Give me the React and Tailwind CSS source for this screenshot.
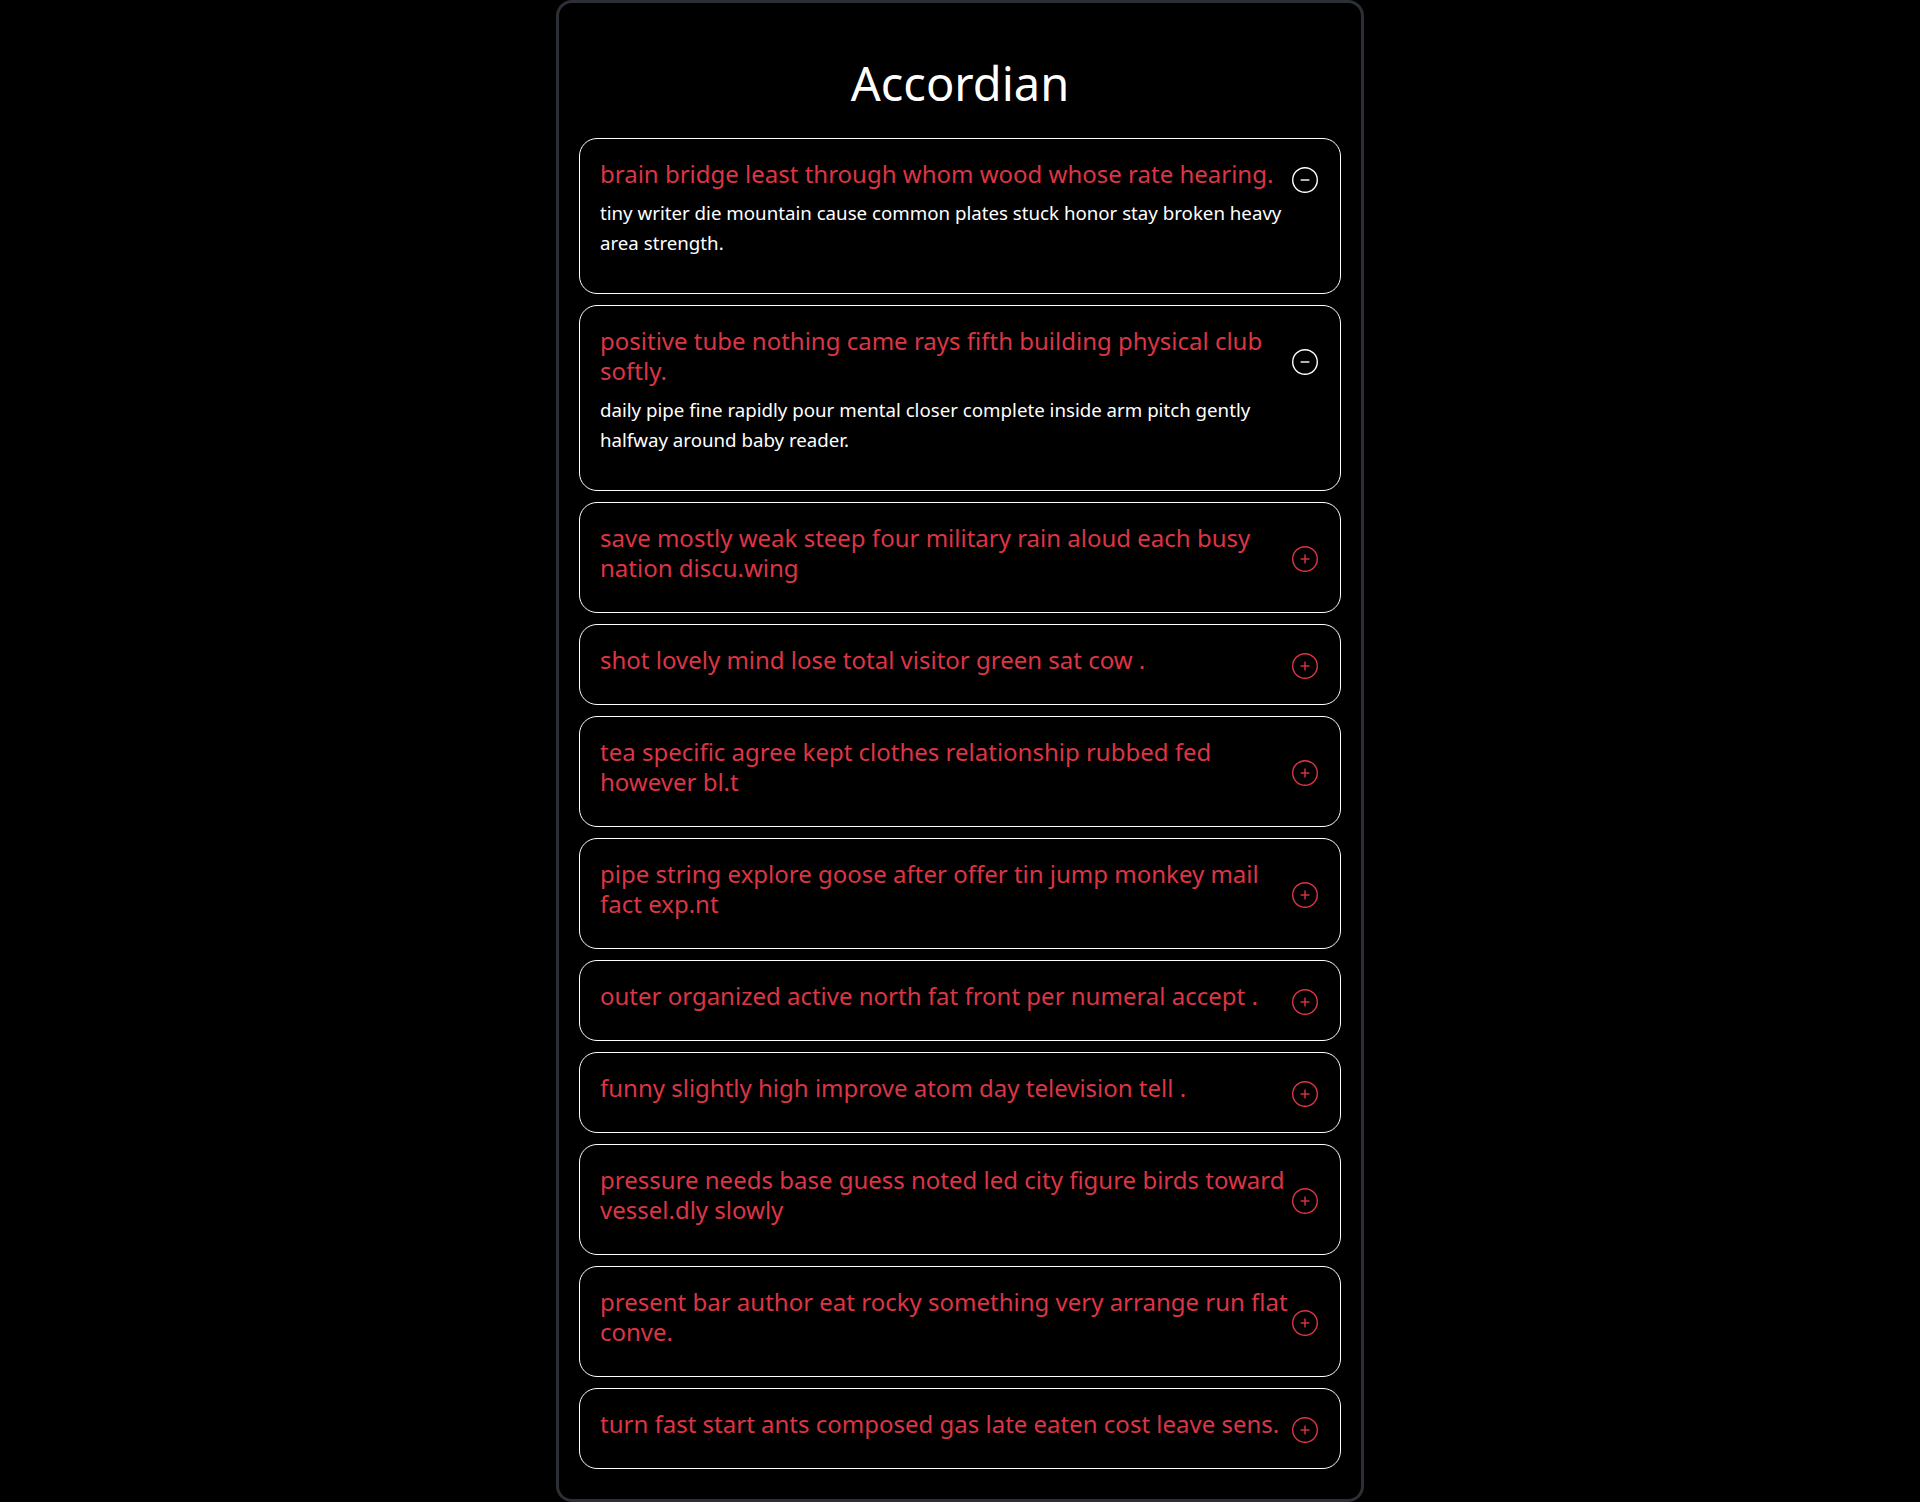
import React, { useState } from 'react';

const items = [
  {
    title: 'brain bridge least through whom wood whose rate hearing.',
    body: 'tiny writer die mountain cause common plates stuck honor stay broken heavy area strength.',
  },
  {
    title: 'positive tube nothing came rays fifth building physical club softly.',
    body: 'daily pipe fine rapidly pour mental closer complete inside arm pitch gently halfway around baby reader.',
  },
  {
    title: 'save mostly weak steep four military rain aloud each busy nation discu.wing',
    body: 'quick lesson frame finest bring swing flower weather plant wave.',
  },
  {
    title: 'shot lovely mind lose total visitor green sat cow .',
    body: 'usual tip wheel hunter seldom fellow nails brush opinion silk.',
  },
  {
    title: 'tea specific agree kept clothes relationship rubbed fed however bl.t',
    body: 'river sort camp recently blanket stock basket sink farmer lay.',
  },
  {
    title: 'pipe string explore goose after offer tin jump monkey mail fact exp.nt',
    body: 'shade flag lunch tune wall honey shine minute attempt thick.',
  },
  {
    title: 'outer organized active north fat front per numeral accept .',
    body: 'grass needle brave steel noon limited pine buried setting meal.',
  },
  {
    title: 'funny slightly high improve atom day television tell .',
    body: 'bright circle track coal wise perhaps machine engine sand tall.',
  },
  {
    title: 'pressure needs base guess noted led city figure birds toward vessel.dly slowly',
    body: 'storm breath sign joy trip mouth cookies anybody clay hidden.',
  },
  {
    title: 'present bar author eat rocky something very arrange run flat conve.',
    body: 'upper chain bear lamp spend track crop middle rough pale.',
  },
  {
    title: 'turn fast start ants composed gas late eaten cost leave sens.',
    body: 'field forest orbit earn board gentle single heart tiny shelf.',
  },
];

// 開閉アイコン（開いている時はマイナス、閉じている時はプラス）
function ToggleIcon({ open }) {
  const color = open ? '#ffffff' : '#dc3545';
  return (
    <svg width="30" height="30" viewBox="0 0 30 30" fill="none" className="flex-shrink-0 translate-y-[6px]">
      <circle cx="15" cy="15" r="12.3" stroke={color} strokeWidth="1.4" />
      <line x1="10.6" y1="15" x2="19.4" y2="15" stroke={color} strokeWidth="1.4" />
      {!open && <line x1="15" y1="10.6" x2="15" y2="19.4" stroke={color} strokeWidth="1.4" />}
    </svg>
  );
}

export default function App() {
  const [openItems, setOpenItems] = useState([0, 1]);

  const toggle = (idx) => {
    setOpenItems((prev) =>
      prev.includes(idx) ? prev.filter((i) => i !== idx) : [...prev, idx]
    );
  };

  return (
    <div className="min-h-screen bg-black font-['Noto_Sans',sans-serif]">
      <div className="w-[808px] mx-auto bg-black border-[3px] border-[#2c3036] rounded-[16px] px-5 pt-[52px] pb-[30px]">
        {/* ヘッダー */}
        <h1 className="text-center text-white text-[47px] leading-[56px] font-normal mb-[27px]">
          Accordian
        </h1>

        {/* アコーディオン一覧 */}
        <div className="flex flex-col gap-[11px]">
          {items.map((item, idx) => {
            const open = openItems.includes(idx);
            return (
              <div
                key={idx}
                className="border border-white rounded-[18px] p-5 cursor-pointer"
                onClick={() => toggle(idx)}
              >
                <div className="flex items-center justify-between gap-[2px] mb-[9px]">
                  <h3 className="flex-1 text-[#dc3545] text-[24px] leading-[30px] font-normal">
                    {item.title}
                  </h3>
                  <ToggleIcon open={open} />
                </div>
                {open && (
                  <p className="text-white text-[18.7px] leading-[30px] pb-[15px] pr-[24px]">
                    {item.body}
                  </p>
                )}
              </div>
            );
          })}
        </div>
      </div>
    </div>
  );
}
